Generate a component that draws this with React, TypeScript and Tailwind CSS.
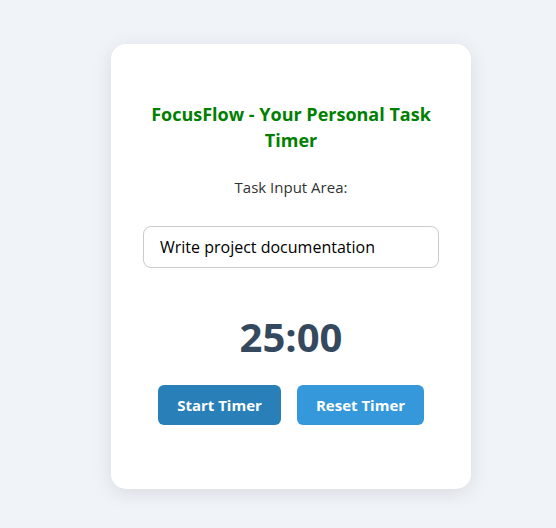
import { useState } from "react";

const App = () => {
  const [task, setTask] = useState("Write project documentation");

  return (
    <div className="min-h-[528px] bg-[#f0f4f8] pt-[44px] pl-[111px] font-['Open_Sans',sans-serif]">
      <div className="w-[360px] h-[445px] bg-white rounded-[15px] shadow-[0_4px_20px_rgba(0,0,0,0.1)] px-8 pt-[57px] flex flex-col items-center text-center">
        <h1 className="text-[18px] leading-[26px] font-bold text-[#008000]">
          FocusFlow - Your Personal Task Timer
        </h1>
        <p className="mt-[23px] text-[15px] leading-[22px] text-[#333]">
          Task Input Area:
        </p>
        <input
          value={task}
          onChange={(e) => setTask(e.target.value)}
          className="mt-[28px] w-full h-[42px] border border-[#ccc] rounded-[8px] px-4 text-[16px] text-black outline-none"
        />
        <div className="mt-[45px] text-[40px] leading-[48px] font-bold text-[#34495e]">
          25:00
        </div>
        <div className="mt-[24px] flex gap-4">
          <button className="w-[123px] h-10 rounded-[6px] bg-[#2980b9] text-white text-[15px] font-bold">
            Start Timer
          </button>
          <button className="w-[127px] h-10 rounded-[6px] bg-[#3498db] text-white text-[15px] font-bold">
            Reset Timer
          </button>
        </div>
      </div>
    </div>
  );
};

export default App;
